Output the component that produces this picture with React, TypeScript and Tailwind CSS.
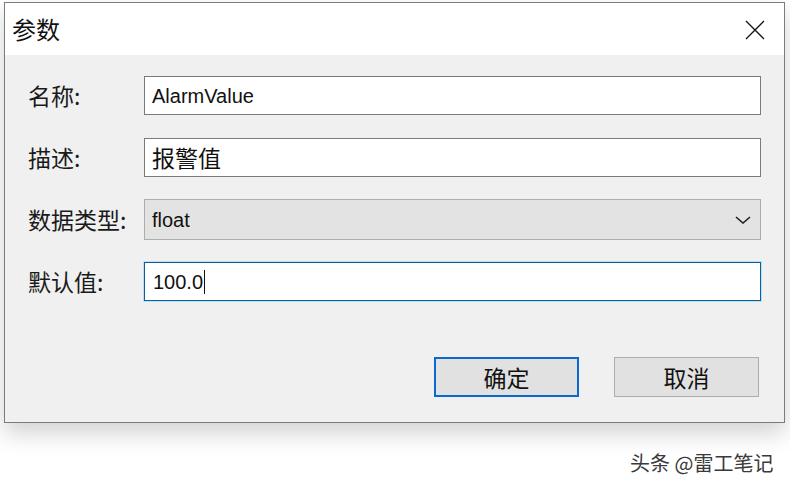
import React from "react";

const cjk = { fontFamily: '"Noto Sans CJK SC", "Noto Sans", sans-serif' };
const latin = { fontFamily: '"Liberation Sans", "Noto Sans CJK SC", sans-serif' };

function Label({ children }: { children: React.ReactNode }) {
  return (
    <div className="w-[116px] shrink-0 text-[23px] leading-none text-[#1a1a1a]" style={cjk}>
      {children}
    </div>
  );
}

export default function App() {
  return (
    <div className="relative w-[790px] h-[492px] bg-white overflow-hidden">
      <div className="ml-[4px] mt-[2px] w-[781px] h-[421px] border border-[#7c7c7c] flex flex-col shadow-[0_10px_22px_rgba(0,0,0,0.18)]">
        <div className="h-[52px] bg-white flex items-center justify-between pl-[7px] pr-[19px]">
          <div className="text-[24px] leading-none text-[#111]" style={cjk}>参数</div>
          <svg width="20" height="20" viewBox="0 0 20 20" className="mt-[1px]">
            <path d="M1 1 L19 19 M19 1 L1 19" stroke="#111" strokeWidth="1.3" fill="none" />
          </svg>
        </div>
        <div className="flex-1 bg-[#f0f0f0] flex flex-col pt-[21px] pl-[23px] pr-[23px]">
          <div className="flex flex-col gap-[23px]">
            <div className="flex items-center h-[39px]">
              <Label>名称:</Label>
              <div className="flex-1 h-[39px] bg-white border border-[#7a7a7a] flex items-center pl-[7px] text-[20px] text-[#111]" style={latin}>
                AlarmValue
              </div>
            </div>
            <div className="flex items-center h-[39px]">
              <Label>描述:</Label>
              <div className="flex-1 h-[39px] bg-white border border-[#7a7a7a] flex items-center pl-[7px] text-[23px] text-[#111]" style={cjk}>
                报警值
              </div>
            </div>
            <div className="flex items-center h-[39px]">
              <Label>数据类型:</Label>
              <div className="flex-1 h-[41px] bg-[#e3e3e3] border border-[#adadad] flex items-center justify-between pl-[7px] pr-[9px] text-[20px] text-[#111]" style={latin}>
                <span>float</span>
                <svg width="16" height="8" viewBox="0 0 16 8">
                  <path d="M1 1 L8 7 L15 1" stroke="#222" strokeWidth="1.6" fill="none" />
                </svg>
              </div>
            </div>
            <div className="flex items-center h-[39px]">
              <Label>默认值:</Label>
              <div className="flex-1 h-[39px] bg-white border border-[#0a5f9e] shadow-[0_0_0_1px_rgba(150,215,240,0.6)] flex items-center pl-[8px] text-[20px] text-[#111]" style={latin}>
                <span>100.0</span>
                <span className="ml-[1px] w-[1px] h-[24px] bg-[#111]" />
              </div>
            </div>
          </div>
          <div className="flex justify-end gap-[35px] mt-[56px] pr-[2px]">
            <div className="w-[145px] h-[40px] bg-[#e1e1e1] border-2 border-[#0a68cf] flex items-center justify-center text-[23px] text-[#111]" style={cjk}>
              确定
            </div>
            <div className="w-[145px] h-[40px] bg-[#e1e1e1] border border-[#adadad] flex items-center justify-center text-[23px] text-[#111]" style={cjk}>
              取消
            </div>
          </div>
        </div>
      </div>
      <div
        className="absolute left-[630px] top-[453px] text-[20px] leading-none text-[#3a3a3a] [text-shadow:0_0_2px_#fff,0_0_2px_#fff]"
        style={cjk}
      >
        头条 @雷工笔记
      </div>
    </div>
  );
}
